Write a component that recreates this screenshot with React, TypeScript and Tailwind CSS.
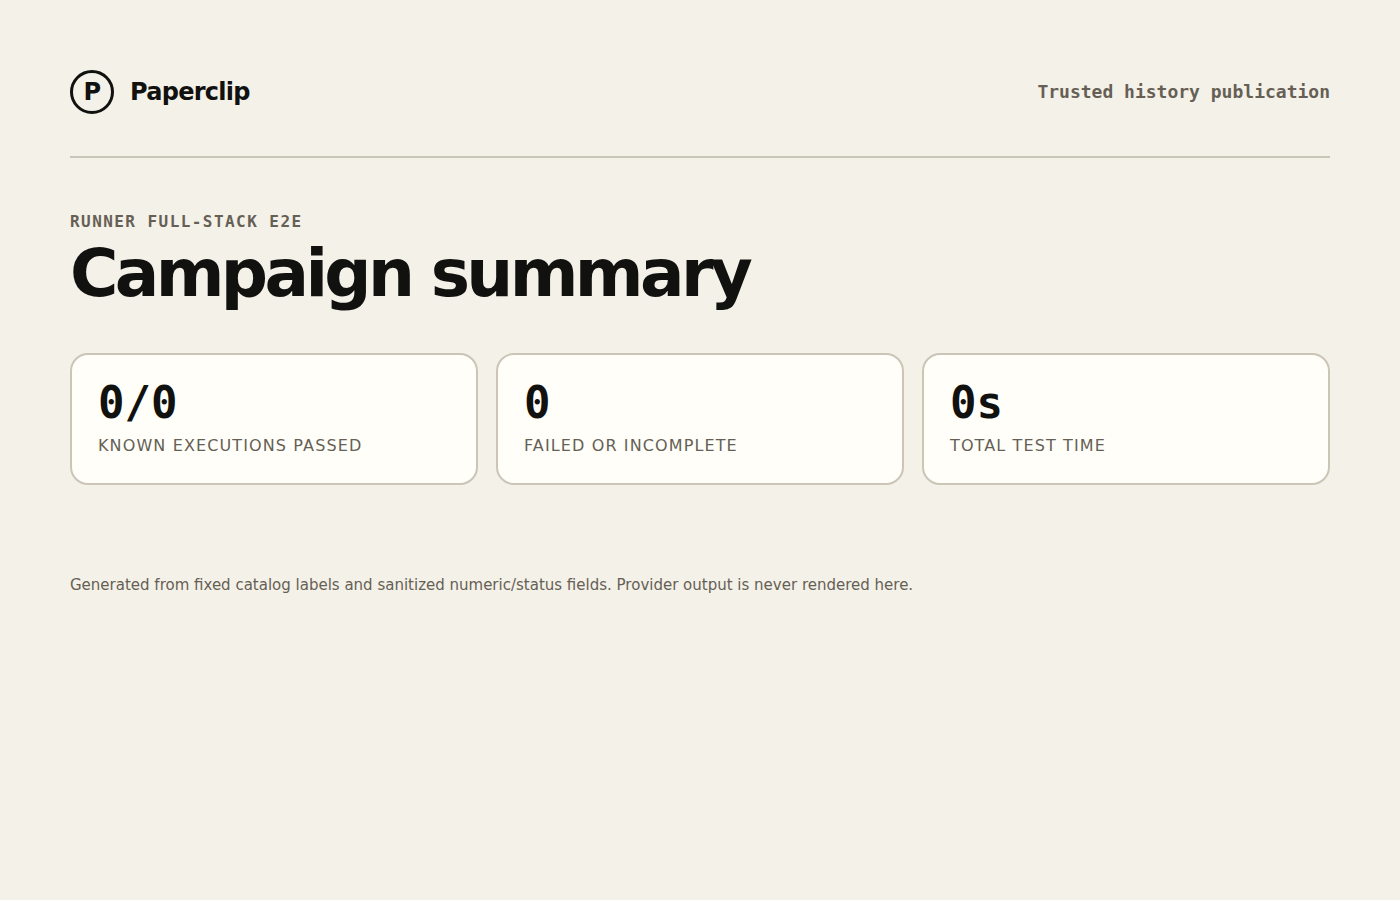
const STATS = [
    { label: 'Known executions passed', value: '0/0' },
    { label: 'Failed or incomplete', value: '0' },
    { label: 'Total test time', value: '0s' },
];

export default function App() {
    return (
        <div className="min-h-screen bg-[#f4f1e8] p-[70px] font-['DejaVu_Sans',sans-serif] text-[#11110f]">
            <header className="flex items-center justify-between border-b-2 border-[#cbc5b8] pb-[42px]">
                <div className="flex items-center gap-4 text-2xl font-bold tracking-[-0.03em]">
                    <span className="flex size-11 items-center justify-center rounded-full border-3 border-[#11110f]">P</span>
                    <span>Paperclip</span>
                </div>
                <span className="font-['DejaVu_Sans_Mono',monospace] text-lg font-bold text-[#665f55]">
                    Trusted history publication
                </span>
            </header>

            <main>
                <p className="mt-[53px] font-['DejaVu_Sans_Mono',monospace] text-base leading-[22px] font-bold tracking-[0.09em] text-[#665f55] uppercase">
                    Runner full-stack E2E
                </p>
                <h1 className="mt-2 text-[66px] leading-[66px] font-bold tracking-[-0.055em]">Campaign summary</h1>

                <section className="mt-[46px] grid grid-cols-3 gap-[18px]">
                    {STATS.map((stat) => (
                        <div key={stat.label} className="rounded-[18px] border-2 border-[#cbc5b8] bg-[#fffef9] p-[26px]">
                            <strong className="block font-['DejaVu_Sans_Mono',monospace] text-[44px] leading-[44px] font-bold">
                                {stat.value}
                            </strong>
                            <span className="mt-[10px] block text-base leading-[22px] tracking-[0.07em] text-[#665f55] uppercase">
                                {stat.label}
                            </span>
                        </div>
                    ))}
                </section>
            </main>

            <footer className="mt-[90px] text-[15px] leading-5 text-[#665f55]">
                Generated from fixed catalog labels and sanitized numeric/status fields. Provider output is never rendered here.
            </footer>
        </div>
    );
}
